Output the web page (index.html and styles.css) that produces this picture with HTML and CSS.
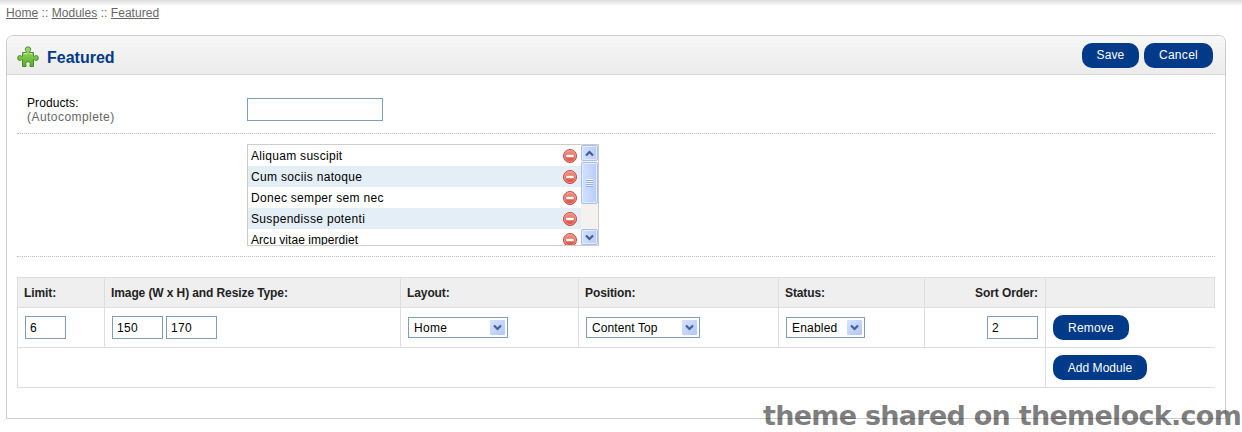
FILE: index.html
```html
<!DOCTYPE html>
<html lang="en">
<head>
<meta charset="utf-8">
<title>Featured</title>
<link rel="stylesheet" href="styles.css">
</head>
<body>
<svg class="defs" width="0" height="0">
  <defs>
    <linearGradient id="red" x1="0" y1="0" x2="0" y2="1"><stop offset="0" stop-color="#f0998a"/><stop offset="1" stop-color="#d9483c"/></linearGradient>
    <linearGradient id="green" x1="0" y1="0" x2="0" y2="1"><stop offset="0" stop-color="#a5dc72"/><stop offset="1" stop-color="#55ae20"/></linearGradient>
    <symbol id="minus" viewBox="0 0 16 16"><circle cx="8" cy="8" r="6.5" fill="url(#red)" stroke="#c6483f"/><circle cx="8" cy="8" r="5.5" fill="none" stroke="#f0a69c" stroke-width=".7"/><rect x="4.3" y="6.8" width="7.4" height="2.4" fill="#fff"/></symbol>
    <symbol id="down" viewBox="0 0 9 7"><path d="M1 1.5 4.5 5 8 1.5" fill="none" stroke="#435f94" stroke-width="2.2"/></symbol>
  </defs>
</svg>
<nav class="breadcrumb"><a>Home</a> :: <a>Modules</a> :: <a>Featured</a></nav>
<main class="box">
  <header class="heading">
    <svg class="puzzle" viewBox="0 0 22 22"><path d="M5.500 6.500H9.300C9.800 5.600 8.300 5 8.300 3.300a2.700 2.400 0 0 1 5.400 0C13.700 5 12.200 5.600 12.700 6.500H16.500V10.300C17.300 11 17.800 9.500 19.200 9.500a2.100 2.500 0 0 1 0 5C17.800 14.500 17.300 13 16.500 13.700V20.500H13C12.200 19.600 13.300 19 13.300 17.700a2.300 2 0 0 0-4.600 0C8.700 19 9.800 19.600 9 20.500H5.500V13.700C4.700 13 4.200 14.500 2.800 14.500a2.100 2.500 0 0 1 0-5C4.200 9.500 4.700 11 5.500 10.300Z" fill="url(#green)" stroke="#4b8c2c" stroke-width="1" stroke-linejoin="round"/><path d="M6.700 7.700h3.700M12.700 7.700h2.600" stroke="#d5f2bd" fill="none"/></svg>
    <h1>Featured</h1>
    <div class="buttons"><a class="button save">Save</a><a class="button cancel">Cancel</a></div>
  </header>
  <div class="content">
    <section class="row products">
      <div class="label">Products:<span class="help">(Autocomplete)</span></div>
      <input class="field search" type="text">
    </section>
    <section class="row chosen">
      <div class="scrollbox">
        <div class="items">
          <div class="item i1"><span>Aliquam suscipit</span><svg><use href="#minus"/></svg></div>
          <div class="item i2"><span>Cum sociis natoque</span><svg><use href="#minus"/></svg></div>
          <div class="item i3"><span>Donec semper sem nec</span><svg><use href="#minus"/></svg></div>
          <div class="item i4"><span>Suspendisse potenti</span><svg><use href="#minus"/></svg></div>
          <div class="item i5"><span>Arcu vitae imperdiet</span><svg><use href="#minus"/></svg></div>
        </div>
        <div class="scrollbar">
          <div class="arrow"><svg class="chev up"><use href="#down"/></svg></div>
          <div class="thumb"><i class="grip"></i></div>
          <div class="arrow end"><svg class="chev"><use href="#down"/></svg></div>
        </div>
      </div>
    </section>
    <table class="list">
      <colgroup><col class="c1"><col class="c2"><col class="c3"><col class="c4"><col class="c5"><col class="c6"><col class="c7"></colgroup>
      <thead><tr><th>Limit:</th><th>Image (W x H) and Resize Type:</th><th>Layout:</th><th>Position:</th><th>Status:</th><th class="right">Sort Order:</th><th class="last"></th></tr></thead>
      <tbody>
        <tr>
          <td><div class="cell"><input class="field tiny" value="6"></div></td>
          <td><div class="cell"><input class="field small" value="150"><input class="field small" value="170"></div></td>
          <td><div class="cell"><div class="select layout"><span>Home</span><b><svg class="chev"><use href="#down"/></svg></b></div></div></td>
          <td><div class="cell"><div class="select position"><span>Content Top</span><b><svg class="chev"><use href="#down"/></svg></b></div></div></td>
          <td><div class="cell"><div class="select status"><span>Enabled</span><b><svg class="chev"><use href="#down"/></svg></b></div></div></td>
          <td><div class="cell end"><input class="field small" value="2"></div></td>
          <td><div class="cell"><a class="button remove">Remove</a></div></td>
        </tr>
        <tr><td colspan="6"></td><td><div class="cell"><a class="button add">Add Module</a></div></td></tr>
      </tbody>
    </table>
  </div>
</main>
<div class="watermark">theme shared on themelock.com</div>
</body>
</html>
```
FILE: styles.css
```css
* { box-sizing: border-box; }
body {
  margin: 0;
  height: 432px;
  overflow: hidden;
  position: relative;
  background: #fff linear-gradient(#dcdcdc, #fff) 0 0 / 100% 6px no-repeat;
  font: 12px/14px "Liberation Sans", Arial, sans-serif;
  color: #000;
}
.defs { position: absolute; }
.breadcrumb { height: 35px; padding: 6px 0 0 6px; color: #666; letter-spacing: .04px; }
.breadcrumb a { text-decoration: underline; }
.box {
  width: 1220px;
  height: 384px;
  margin-left: 6px;
  border: 1px solid #ccc;
  border-radius: 7px 7px 0 0;
}
.heading {
  height: 39px;
  display: flex;
  align-items: center;
  padding: 0 12px 0 10px;
  border-bottom: 1px solid #d8d8d8;
  border-radius: 6px 6px 0 0;
  background: linear-gradient(#f7f7f7, #ebebeb);
}
.puzzle { width: 22px; height: 22px; margin-top: 3px; }
h1 { margin: 5px 0 0 8px; font-size: 16px; line-height: 18px; color: #003a88; letter-spacing: 0; }
.buttons { display: flex; gap: 5px; margin: 0 0 0 auto; }
.button {
  height: 25px;
  display: flex;
  align-items: center;
  justify-content: center;
  border-radius: 10px;
  background: #003a88;
  color: #fff;
  letter-spacing: .3px;
}
.save { width: 57px; letter-spacing: .1px; }
.cancel { width: 69px; letter-spacing: .3px; }
.remove { width: 76px; letter-spacing: .2px; }
.add { width: 94px; letter-spacing: .05px; }
.content { padding: 11px 10px 0; }
.row { display: flex; width: 1198px; border-bottom: 1px dotted #bbb; }
.products { height: 48px; padding: 10px 0 0 10px; }
.label { width: 220px; letter-spacing: .1px; }
.help { display: block; color: #666; letter-spacing: .45px; }
.field {
  height: 23px;
  padding: 1px 4px 0;
  border: 1px solid #7f9db9;
  border-radius: 0;
  background: #fff;
  font: 12px "Liberation Sans", Arial, sans-serif;
  letter-spacing: .35px;
}
.search { width: 136px; margin-top: 2px; }
.tiny { width: 41px; }
.small { width: 51px; }
.chosen { height: 123px; padding: 10px 0 0 230px; }
.scrollbox { width: 352px; height: 102px; display: flex; overflow: hidden; border: 1px solid #ccc; }
.items { flex: 1; }
.item { height: 21px; display: flex; align-items: center; justify-content: space-between; padding: 1px 3px 0 3px; }
.item:nth-child(even) { background: #e4eef7; }
.item svg { width: 16px; height: 16px; }
.i1 { letter-spacing: .3px; }
.i2 { letter-spacing: .33px; }
.i3 { letter-spacing: .3px; }
.i4 { letter-spacing: .32px; }
.i5 { letter-spacing: .05px; }
.scrollbar { width: 17px; display: flex; flex-direction: column; background: #f3f2ee; }
.arrow, .thumb {
  display: flex;
  align-items: center;
  justify-content: center;
  border: 1px solid #a9c0ee;
  border-radius: 2px;
  background: linear-gradient(90deg, #d2e0ff, #b9cdfa);
  box-shadow: inset 0 0 0 1px #e2ebff;
}
.arrow { height: 16px; }
.thumb { height: 42px; margin-top: 1px; }
.end { margin-top: auto; }
.grip { width: 7px; height: 8px; background: repeating-linear-gradient(#eef4ff 0 1px, #8eaee6 1px 2px); }
.chev { width: 9px; height: 7px; }
.up { transform: rotate(180deg); }
.list { width: 1198px; margin-top: 20px; table-layout: fixed; border-collapse: collapse; }
.c1 { width: 87px; }
.c2 { width: 296px; }
.c3 { width: 178px; }
.c4 { width: 200px; }
.c5 { width: 146px; }
.c6 { width: 121px; }
.c7 { width: 169px; }
.list th, .list td { padding: 0 7px; border: 1px solid #ddd; text-align: left; }
.list th { height: 30px; padding: 0 7px 0 6px; background: #efefef; color: #222; letter-spacing: -.1px; }
.list .right { text-align: right; }
.list td { height: 40px; }
.list td:last-child { border-right: 0; }
.cell { display: flex; align-items: center; gap: 3px; }
.cell.end { margin: 0; justify-content: flex-end; }
.select { height: 21px; display: flex; align-items: center; justify-content: space-between; padding: 0 2px 0 5px; border: 1px solid #7f9db9; }
.select b { width: 15px; height: 15px; display: flex; align-items: center; justify-content: center; border-radius: 1px; background: linear-gradient(135deg, #d6e2ff, #b3c7f5); }
.layout { width: 100px; letter-spacing: .3px; }
.position { width: 114px; letter-spacing: .1px; }
.status { width: 79px; letter-spacing: .2px; }
.watermark {
  position: absolute;
  left: 763px;
  top: 400px;
  font: bold 27px/32px "DejaVu Sans", sans-serif;
  letter-spacing: -.72px;
  white-space: nowrap;
  color: rgba(0, 0, 0, .52);
}
```
